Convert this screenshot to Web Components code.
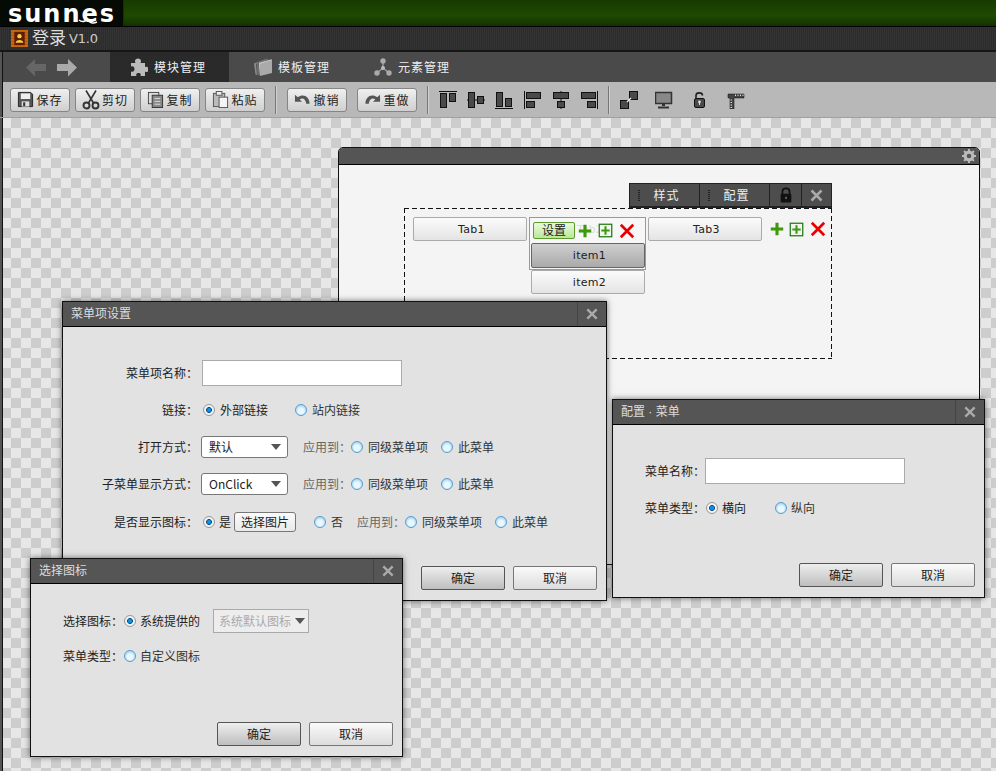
<!DOCTYPE html>
<html lang="zh">
<head>
<meta charset="utf-8">
<title>登录 V1.0</title>
<style>
  html, body { margin: 0; height: 100%; }
  body {
    width: 996px; height: 771px; overflow: hidden;
    display: flex; flex-direction: column;
    font: 12px "Liberation Sans", "Noto Sans CJK SC", sans-serif; color: #222;
  }
</style>
</head>
<body>
<sn-topbar></sn-topbar>
<sn-titlebar></sn-titlebar>
<sn-tabs>
  <sn-tab icon="puzzle" active>模块管理</sn-tab>
  <sn-tab icon="books">模板管理</sn-tab>
  <sn-tab icon="nodes">元素管理</sn-tab>
</sn-tabs>
<sn-toolbar>
  <sn-tool icon="save">保存</sn-tool>
  <sn-tool icon="cut">剪切</sn-tool>
  <sn-tool icon="copy">复制</sn-tool>
  <sn-tool icon="paste">粘贴</sn-tool>
  <sn-sep></sn-sep>
  <sn-tool icon="undo">撤销</sn-tool>
  <sn-tool icon="redo" style="margin-left:5px">重做</sn-tool>
  <sn-sep></sn-sep>
  <sn-icon name="alignTop" size="18"></sn-icon>
  <sn-icon name="alignMid" size="18" style="margin-left:5px"></sn-icon>
  <sn-icon name="alignBottom" size="18" style="margin-left:5px"></sn-icon>
  <sn-icon name="alignLeft" size="18" style="margin-left:6px"></sn-icon>
  <sn-icon name="alignCenter" size="18" style="margin-left:5px"></sn-icon>
  <sn-icon name="alignRight" size="18" style="margin-left:5px"></sn-icon>
  <sn-sep></sn-sep>
  <sn-icon name="group" size="18"></sn-icon>
  <sn-icon name="monitor" size="18" style="margin-left:12px"></sn-icon>
  <sn-icon name="unlock" size="18" style="margin-left:13px"></sn-icon>
  <sn-icon name="ruler" size="18" style="margin-left:13px"></sn-icon>
</sn-toolbar>

<sn-canvas>
  <sn-stage style="left:338px;top:29px;width:642px;height:418px">
    <sn-menu-editor></sn-menu-editor>
  </sn-stage>

  <sn-window heading="配置 · 菜单" style="left:612px;top:281px;width:373px;height:199px;--pad:33px;--gap:11px;--label:92px;--label-gap:0px">
    <sn-row label="菜单名称："><sn-input></sn-input></sn-row>
    <sn-row label="菜单类型：" style="height:24px;margin-top:1px">
      <sn-radio checked style="margin-left:1px;--text-gap:4px">横向</sn-radio>
      <sn-radio style="margin-left:29px;--text-gap:4px">纵向</sn-radio>
    </sn-row>
  </sn-window>

  <sn-window heading="菜单项设置" style="left:62px;top:183px;width:545px;height:300px;--pad:33px;--gap:11px;--label:135px;--label-gap:4px">
    <sn-row label="菜单项名称："><sn-input></sn-input></sn-row>
    <sn-row label="链接：">
      <sn-radio checked style="margin-left:1px">外部链接</sn-radio>
      <sn-radio style="margin-left:27px">站内链接</sn-radio>
    </sn-row>
    <sn-row label="打开方式：">
      <sn-select style="margin-left:-1px">默认</sn-select>
      <sn-apply style="margin-left:15px"></sn-apply>
    </sn-row>
    <sn-row label="子菜单显示方式：">
      <sn-select style="margin-left:-1px">OnClick</sn-select>
      <sn-apply style="margin-left:15px"></sn-apply>
    </sn-row>
    <sn-row label="是否显示图标：" style="margin-top:1px">
      <sn-radio checked style="margin-left:1px;--text-gap:4px">是</sn-radio>
      <sn-pick style="margin-left:3px">选择图片</sn-pick>
      <sn-radio style="margin-left:18px">否</sn-radio>
      <sn-apply style="margin-left:14px"></sn-apply>
    </sn-row>
  </sn-window>

  <sn-window heading="选择图标" style="left:30px;top:440px;width:373px;height:199px;--pad:25px;--gap:11px;--label:92px;--label-gap:0px">
    <sn-row label="选择图标：" style="height:24px">
      <sn-radio checked style="margin-left:1px;--text-gap:4px">系统提供的</sn-radio>
      <sn-select disabled style="margin-left:13px;width:96px;--select-h:24px">系统默认图标</sn-select>
    </sn-row>
    <sn-row label="菜单类型：" style="height:24px">
      <sn-radio style="margin-left:1px;--text-gap:4px">自定义图标</sn-radio>
    </sn-row>
  </sn-window>
</sn-canvas>

<script>
"use strict";

// iconos dibujados a mano, viewBox de 18x18 salvo que se indique otro
const D = 'fill="#4a4a4a" stroke="#111"';
const ICONS = {
  back: `<path d="M0 9.5 9 1v5h11v7H9v5.500z" fill="#666"/>`,
  forward: `<path d="M20 9.500 11 1v5H0v7h11v5.500z" fill="#aaa"/>`,
  puzzle: `<path d="M1 5h4.500C4 2 6 .5 8 .5s4 1.500 2.500 4.500H15v4c2.500-1.200 3.500.8 3.500 2.500S17 15 15 13.500V18H10.500c1-2-.5-3-2-3s-3 1-2 3H1v-4.500C3 14.500 4.500 13 4.500 11S3 7.500 1 8.500z" fill="#bbb"/>`,
  books: `<path d="M0 5.500 11 1.500l1 1L2 6l1 11-1.500-.5z" fill="#8c8c8c"/><path d="M2.500 4.500 13 .5l1.500 1L4.500 5l1 12.500L3.500 17z" fill="#707070"/><path d="M5 5 17 1.500l1 .5v13L6 18z" fill="#aaa"/><path d="M5 5 17 1.500l1 .5L6 5.800 6 18z" fill="#ccc"/>`,
  nodes: `<path d="M9 4v6M9 10l-6 5M9 10l6 5" stroke="#999" stroke-width="1.500"/><circle cx="9" cy="3" r="2.700" fill="#aaa"/><circle cx="9" cy="10" r="2" fill="#bbb"/><circle cx="3" cy="15" r="2.700" fill="#aaa"/><circle cx="15" cy="15" r="2.700" fill="#aaa"/>`,
  save: `<path d="M1.500 1.500h13l2 2v13h-15z" fill="#555" stroke="#222"/><rect x="4" y="2.500" width="10" height="6" fill="#eee"/><rect x="5" y="11" width="8" height="5.500" fill="#ddd"/><rect x="6.500" y="12" width="2.200" height="4" fill="#333"/>`,
  cut: `<path d="M4 0l7.500 12.500M14 0 6.500 12.500" stroke="#333" stroke-width="1.600" fill="none"/><circle cx="4.500" cy="15" r="3" fill="none" stroke="#333" stroke-width="1.900"/><circle cx="13.500" cy="15" r="3" fill="none" stroke="#333" stroke-width="1.900"/>`,
  copy: `<rect x="1.500" y="1.500" width="11" height="12" fill="#ddd" stroke="#444"/><rect x="5.500" y="4.500" width="11" height="13" fill="#888" stroke="#333"/><path d="M8 8h6M8 11h6M8 14h6" stroke="#ddd"/>`,
  paste: `<rect x="1.500" y="2.500" width="12" height="14" fill="#bbb" stroke="#555"/><rect x="4.500" y=".5" width="6" height="4" fill="#eee" stroke="#555"/><rect x="7.500" y="6.500" width="9" height="11" fill="#f4f4f4" stroke="#555"/>`,
  undo: `<path d="M1 4v7.500h7.500L6 9c3-2 6-1 7 4.500h3.500C16.500 6 10 2.500 4 6.500z" fill="#555"/>`,
  redo: `<path d="M17 4v7.500H9.500L12 9C9 7 6 8 5 13.500H1.500C1.500 6 8 2.500 14 6.500z" fill="#555"/>`,
  alignTop: `<path d="M0 .5h18" stroke="#111"/><rect x="1.500" y="2.500" width="6" height="14" ${D}/><rect x="10.500" y="2.500" width="6" height="8" ${D}/>`,
  alignMid: `<path d="M0 9h18" stroke="#111"/><rect x="1.500" y="1.500" width="6" height="15" ${D}/><rect x="10.500" y="5.500" width="6" height="7" ${D}/>`,
  alignBottom: `<path d="M0 17.500h18" stroke="#111"/><rect x="1.500" y="1.500" width="6" height="14" ${D}/><rect x="10.500" y="7.500" width="6" height="8" ${D}/>`,
  alignLeft: `<path d="M.5 0v18" stroke="#111"/><rect x="2.500" y="1.500" width="14" height="6" ${D}/><rect x="2.500" y="10.500" width="8" height="6" ${D}/>`,
  alignCenter: `<path d="M9 0v18" stroke="#111"/><rect x="1.500" y="1.500" width="15" height="6" ${D}/><rect x="5.500" y="10.500" width="7" height="6" ${D}/>`,
  alignRight: `<path d="M17.500 0v18" stroke="#111"/><rect x="1.500" y="1.500" width="14" height="6" ${D}/><rect x="7.500" y="10.500" width="8" height="6" ${D}/>`,
  group: `<rect x="9.500" y=".5" width="8" height="8" ${D}/><rect x=".5" y="9.500" width="8" height="8" ${D}/><path d="M7 11l4-4" stroke="#eee" stroke-width="1.500"/>`,
  monitor: `<rect x=".5" y="1.500" width="16" height="11" fill="#888" stroke="#333" stroke-width="1.500"/><path d="M7 13h3v2H7z" fill="#333"/><path d="M3 15.500h11v2H3z" fill="#333"/>`,
  unlock: `<path d="M5 8V4.500C5 1 11.500 1 11.500 4.500" fill="none" stroke="#222" stroke-width="1.600"/><rect x="3.500" y="7.500" width="10" height="9" rx="1.500" fill="#4a4a4a" stroke="#111"/><circle cx="8.500" cy="11" r="1.400" fill="#ddd"/><path d="M8 11h1v3H8z" fill="#ddd"/>`,
  ruler: `<path d="M1 3h16v4H7v11H3V7H1z" fill="#444" stroke="#111" stroke-width=".5"/><path d="M8.500 3.500v1.500M11 3.500v1.500M13.500 3.500v1.500M16 3.500v1.500M3.500 9H5M3.500 11.500H5M3.500 14H5M3.500 16.500H5" stroke="#ddd"/>`,
  lock: `<path d="M5 8V5c0-4.500 8-4.500 8 0v3" fill="none" stroke="#111" stroke-width="2"/><rect x="3" y="7.500" width="12" height="10" rx="1.500" fill="#111"/><rect x="8.300" y="11" width="1.400" height="2.500" fill="#888"/>`,
  close: `<path d="M3 3l12 12M15 3 3 15" stroke="#aaa" stroke-width="3"/>`,
  gear: `<circle cx="9" cy="9" r="5" fill="none" stroke="#bbb" stroke-width="4"/><path d="M9 0v18M0 9h18M2.600 2.600l12.800 12.800M15.400 2.600 2.600 15.400" stroke="#bbb" stroke-width="2.500" stroke-dasharray="3 12 3"/>`,
  plus: `<path d="M9 2v14M2 9h14" stroke="#3a9a08" stroke-width="3.500"/>`,
  boxPlus: `<rect x="1.500" y="1.500" width="15" height="15" fill="#f4f4f4" stroke="#1d7d10" stroke-width="1.500"/><path d="M9 4v10M4 9h10" stroke="#3a9a08" stroke-width="2.500"/>`,
  remove: `<path d="M2 2l14 14M16 2 2 16" stroke="#e80000" stroke-width="3"/>`,
  appIcon: `<rect width="18" height="18" fill="#c9660f"/><path d="M0 3h18M0 6h18M0 9h18M0 12h18M0 15h18" stroke="#a8500a" stroke-width=".7"/><rect x="3.500" y="2" width="11" height="14" fill="#5e1c06"/><circle cx="9" cy="6.500" r="2.300" fill="#f6cf3a"/><path d="M5 13.500c0-4 8-4 8 0z" fill="#f6cf3a"/>`
};

const FRAME = "box-shadow:inset 2px 0 #555,inset 3px 0 #111";

// clase base: estilo y markup en el shadow root
class SnElement extends HTMLElement {
  connectedCallback() {
    if (this.shadowRoot) return;
    this.attachShadow({mode: "open"}).innerHTML =
      `<style>${this.constructor.css}</style>${this.markup()}`;
  }
  markup() { return "<slot></slot>"; }
}

function svg(name, w, h, vb) {
  return `<svg width="${w}" height="${h || w}" viewBox="${vb || "0 0 18 18"}" style="display:block;flex:none">${ICONS[name]}</svg>`;
}

class SnIcon extends SnElement {
  static css = `:host{display:block;flex:none}`;
  markup() { return svg(this.getAttribute("name"), this.getAttribute("size") || 14); }
}

class SnTopbar extends SnElement {
  static css = `
    :host{display:flex;height:26px;flex:none;background:linear-gradient(#163a00,#1f4a02 60%,#143000)}
    .logo{width:124px;height:26px;background:#050a04;color:#fff;box-sizing:border-box;padding-left:8px;position:relative;
      font:700 24px/28px "DejaVu Sans",sans-serif;letter-spacing:2px;border-right:1px solid #1a2c10}
    svg{position:absolute;left:78px;top:17px}`;
  markup() {
    return `<div class="logo">sunnes<svg width="20" height="8" viewBox="0 0 20 8"><path d="M1 3c5 4 6-1 9 1s5 3 9 1" fill="none" stroke="#fff" stroke-width="1.500"/></svg></div>`;
  }
}

class SnTitlebar extends SnElement {
  static css = `
    :host{display:flex;align-items:center;height:24px;flex:none;padding-left:11px;box-sizing:border-box;border-top:1px solid #000;
      background:repeating-linear-gradient(90deg,#333 0 1px,#2c2c2c 1px 2px);color:#ddd}
    b{font:400 17px/20px "Liberation Sans","Noto Sans CJK SC",sans-serif;margin-left:4px}
    i{font:13px "DejaVu Sans",sans-serif;margin-left:3px;font-style:normal;color:#ccc;letter-spacing:-.2px}`;
  markup() { return `${svg("appIcon", 17)}<b>登录</b><i>V1.0</i>`; }
}

class SnTabs extends SnElement {
  static css = `
    :host{display:flex;height:32px;flex:none;box-sizing:border-box;background:#4a4a4a;border-top:2px solid #161616;${FRAME}}
    .nav{width:110px;display:flex;gap:11px;padding-left:26px;box-sizing:border-box;align-items:center}`;
  markup() { return `<div class="nav">${svg("back", 20, 19, "0 0 20 19")}${svg("forward", 20, 19, "0 0 20 19")}</div><slot></slot>`; }
}

class SnTab extends SnElement {
  static css = `
    :host{display:flex;align-items:center;gap:6px;width:119px;box-sizing:border-box;padding:0 0 0 20px;color:#eee;letter-spacing:1px;
      font-family:"Noto Sans CJK SC",sans-serif}
    :host([active]){background:#2a2a2a}
    :host(:nth-child(2)){padding-left:25px;width:120px;gap:6px}
    :host(:nth-child(3)){padding-left:25px;gap:6px}
    span{padding-bottom:1px}`;
  markup() { return `${svg(this.getAttribute("icon"), 18)}<span><slot></slot></span>`; }
}

class SnToolbar extends SnElement {
  static css = `
    :host{display:flex;align-items:center;gap:5px;height:36px;flex:none;box-sizing:border-box;padding:0 0 0 10px;background:#b8b8b8;border-bottom:1px solid #a0a0a0;${FRAME}}`;
}

class SnSep extends SnElement {
  static css = `:host{display:block;width:2px;height:28px;background:linear-gradient(90deg,#777 50%,#d0d0d0 50%);margin:0 5px;flex:none}`;
  markup() { return ""; }
}

class SnTool extends SnElement {
  static css = `
    :host{display:flex;align-items:center;justify-content:center;gap:2px;width:60px;height:24px;box-sizing:border-box;flex:none;
      border:1px solid #858585;border-radius:3px;background:linear-gradient(#f0f0f0,#cfcfcf);color:#222;letter-spacing:1px;
      font-family:"Noto Sans CJK SC",sans-serif}`;
  markup() {
    const icon = this.getAttribute("icon");
    return `${icon === "cut" ? svg(icon, 18, 20, "0 0 18 19") : svg(icon, 17)}<span><slot></slot></span>`;
  }
}

class SnCanvas extends SnElement {
  static css = `
    :host{display:block;position:relative;flex:1;overflow:hidden;
      background:conic-gradient(#cdcdcd 25%,#e7e7e7 0 50%,#cdcdcd 0 75%,#e7e7e7 0) 1px 0/20px 20px;${FRAME}}
    ::slotted(*){position:absolute}`;
}

class SnWindow extends SnElement {
  static css = `
    :host{display:flex;flex-direction:column;box-sizing:border-box;border:1px solid #111;background:#e2e2e2;box-shadow:0 0 6px rgba(0,0,0,.55)}
    .head{display:flex;align-items:center;height:24px;flex:none;background:#555;border-bottom:1px solid #000;color:#ddd;padding-left:8px;
      font-family:"Liberation Sans","Noto Sans CJK SC",sans-serif}
    .head span{flex:1;padding-bottom:3px}
    .x{width:28px;height:100%;display:flex;align-items:center;justify-content:center;border-left:1px solid #444}
    .body{flex:1;display:flex;flex-direction:column;gap:var(--gap);padding-top:var(--pad)}
    .foot{margin-top:auto;display:flex;justify-content:flex-end;gap:8px;padding:0 9px 10px 0}
    .btn{width:84px;height:24px;box-sizing:border-box;display:flex;align-items:center;justify-content:center;border:1px solid #777;border-radius:2px;padding-bottom:2px;
      background:linear-gradient(#fafafa,#dcdcdc);font-family:"Noto Sans CJK SC",sans-serif}
    .btn.ok{border-color:#555;background:linear-gradient(#eee,#bebebe)}`;
  markup() {
    return `<div class="head"><span>${this.getAttribute("heading")}</span><div class="x">${svg("close", 14)}</div></div>
      <div class="body"><slot></slot>
        <div class="foot"><div class="btn ok">确定</div><div class="btn">取消</div></div>
      </div>`;
  }
}

class SnRow extends SnElement {
  static css = `
    :host{display:flex;align-items:center;height:26px;flex:none}
    .l{width:var(--label);margin-right:var(--label-gap);text-align:right;flex:none;font-family:"Noto Sans CJK SC",sans-serif;color:#222;white-space:nowrap;padding-bottom:2px}
    .c{display:flex;align-items:center}`;
  markup() { return `<div class="l">${this.getAttribute("label")}</div><div class="c"><slot></slot></div>`; }
}

class SnInput extends SnElement {
  static css = `:host{display:block;width:200px;height:26px;box-sizing:border-box;background:#fff;border:1px solid #aaa}`;
  markup() { return ""; }
}

class SnRadio extends SnElement {
  static css = `
    :host{display:inline-flex;align-items:center;gap:var(--text-gap,5px);flex:none;font-family:"Noto Sans CJK SC",sans-serif;color:#333}
    i{width:12px;height:12px;border-radius:50%;box-sizing:border-box;display:block;flex:none;border:1px solid #5a9ccb;
      background:radial-gradient(circle at 50% 60%,#eaf7ff 0 35%,#a6d8f5 75%)}
    span{padding-bottom:2px}
    :host([checked]){color:#222}
    :host([checked]) i{border-color:#999;background:radial-gradient(circle,#0c8fe6 0 22%,#04467a 38%,#f2f2f2 44% 72%,#bbb 100%)}`;
  markup() { return `<i></i><span><slot></slot></span>`; }
}

class SnApply extends SnElement {
  static css = `
    :host{display:inline-flex;align-items:center;flex:none;font-family:"Noto Sans CJK SC",sans-serif}
    span{color:#666;padding-bottom:2px}`;
  markup() {
    return `<span>应用到：</span><sn-radio>同级菜单项</sn-radio><sn-radio style="margin-left:13px">此菜单</sn-radio>`;
  }
}

class SnSelect extends SnElement {
  static css = `
    :host{display:flex;align-items:center;justify-content:space-between;width:87px;height:var(--select-h,22px);box-sizing:border-box;padding:0 6px 0 7px;
      background:#fff;border:1px solid #777;border-radius:3px;font-family:"Noto Sans CJK SC",sans-serif;color:#222;flex:none;white-space:nowrap}
    :host([disabled]){border:1px solid #aaa;border-radius:0;color:#aaa;padding:0 3px 0 5px;background:#ededed}
    span{padding-bottom:2px}
    i{width:0;height:0;border:5.500px solid transparent;border-top:6px solid #555;border-bottom:0;flex:none}`;
  markup() { return `<span><slot></slot></span><i></i>`; }
}

class SnPick extends SnElement {
  static css = `
    :host{display:flex;align-items:center;justify-content:center;width:62px;height:20px;box-sizing:border-box;background:linear-gradient(#fafafa,#eaeaea);padding-bottom:2px;
      border:1px solid #777;border-radius:3px;font-family:"Noto Sans CJK SC",sans-serif;flex:none}`;
}

class SnStage extends SnElement {
  static css = `
    :host{display:flex;flex-direction:column;box-sizing:border-box;border:1px solid #111;border-radius:5px 5px 0 0;background:#f4f4f4}
    .head{height:16px;flex:none;background:#555;border-bottom:1px solid #000;border-radius:4px 4px 0 0;display:flex;justify-content:flex-end;align-items:center;padding-right:3px}
    .body{flex:1;position:relative}`;
  markup() { return `<div class="head">${svg("gear", 14)}</div><div class="body"><slot></slot></div>`; }
}

class SnMenuEditor extends SnElement {
  static css = `
    :host{position:absolute;left:65px;top:43px;width:428px;height:151px;box-sizing:border-box;display:block;
      background:
        repeating-linear-gradient(90deg,#111 0 5px,transparent 5px 8px) 0 0/100% 1px no-repeat,
        repeating-linear-gradient(90deg,#111 0 5px,transparent 5px 8px) 0 100%/100% 1px no-repeat,
        repeating-linear-gradient(#111 0 5px,transparent 5px 8px) 0 0/1px 100% no-repeat,
        repeating-linear-gradient(#111 0 5px,transparent 5px 8px) 100% 0/1px 100% no-repeat}
    .bar{position:absolute;left:225px;top:-25px;width:203px;height:25px;box-sizing:border-box;display:flex;background:#4d4d4d;border:1px solid #222;border-bottom:2px solid #222;color:#eee;
      font-family:"Noto Sans CJK SC",sans-serif}
    .bar div{display:flex;align-items:center;justify-content:center;border-right:1px solid #222;box-sizing:border-box;position:relative;height:100%}
    .bar .t{width:70px;letter-spacing:1px;padding:0 0 2px 4px}
    .bar .t::before{content:"";position:absolute;left:8px;top:6px;height:11px;width:2px;background:repeating-linear-gradient(#222 0 1px,transparent 1px 2px)}
    .row{display:flex;gap:2px;padding:9px 0 0 9px;align-items:flex-start}
    .tab{width:114px;height:24px;box-sizing:border-box;display:flex;align-items:center;justify-content:center;border:1px solid #aaa;border-radius:2px;padding-left:3px;
      background:linear-gradient(#fbfbfb,#e4e4e4);color:#222;letter-spacing:.3px;flex:none;font-family:"DejaVu Sans",sans-serif;font-size:11px}
    .col{width:117px;flex:none;display:flex;flex-direction:column}
    .open{box-sizing:border-box;height:53px;border:1px solid #999;display:flex;flex-direction:column;background:#f7f7f7}
    .tools{height:25px;display:flex;align-items:center;padding-left:3px;position:relative;flex:none}
    .ghost{position:absolute;left:47px;top:5px;color:#ddd;font-family:"DejaVu Sans",sans-serif;font-size:11px}
    .set{width:42px;height:17px;box-sizing:border-box;display:flex;align-items:center;justify-content:center;border:1px solid #5e9c2e;border-radius:2px;padding-bottom:2px;
      background:linear-gradient(#eafbdc,#b9e79a);font-family:"Noto Sans CJK SC",sans-serif;position:relative}
    .tools sn-icon,.side sn-icon{position:relative}
    .open .tab{height:25px;background:linear-gradient(#cfcfcf,#a9a9a9);border:1px solid #666;margin-left:1px}
    .item2{margin:0 0 0 2px}
    .side{display:flex;align-items:center;height:24px;margin-left:5px}`;
  markup() {
    const ops = (a, b) => `
      <sn-icon name="plus" size="16" style="margin-left:${a}px"></sn-icon>
      <sn-icon name="boxPlus" size="15" style="margin-left:${b}px"></sn-icon>
      <sn-icon name="remove" size="16" style="margin-left:6px"></sn-icon>`;
    return `
      <div class="bar">
        <div class="t">样式</div><div class="t">配置</div>
        <div style="width:32px">${svg("lock", 16)}</div>
        <div style="flex:1;border:0">${svg("close", 15)}</div>
      </div>
      <div class="row">
        <div class="tab">Tab1</div>
        <div class="col">
          <div class="open">
            <div class="tools"><span class="ghost">Tab2</span><div class="set">设置</div>${ops(2, 5)}</div>
            <div class="tab">item1</div>
          </div>
          <div class="tab item2">item2</div>
        </div>
        <div class="tab">Tab3</div>
        <div class="side">${ops(0, 4)}</div>
      </div>`;
  }
}

[["sn-icon", SnIcon], ["sn-topbar", SnTopbar], ["sn-titlebar", SnTitlebar], ["sn-tabs", SnTabs], ["sn-tab", SnTab],
 ["sn-toolbar", SnToolbar], ["sn-sep", SnSep], ["sn-tool", SnTool], ["sn-canvas", SnCanvas], ["sn-window", SnWindow],
 ["sn-row", SnRow], ["sn-input", SnInput], ["sn-radio", SnRadio], ["sn-apply", SnApply], ["sn-select", SnSelect],
 ["sn-pick", SnPick], ["sn-stage", SnStage], ["sn-menu-editor", SnMenuEditor]
].forEach(([name, cls]) => customElements.define(name, cls));
</script>
</body>
</html>
